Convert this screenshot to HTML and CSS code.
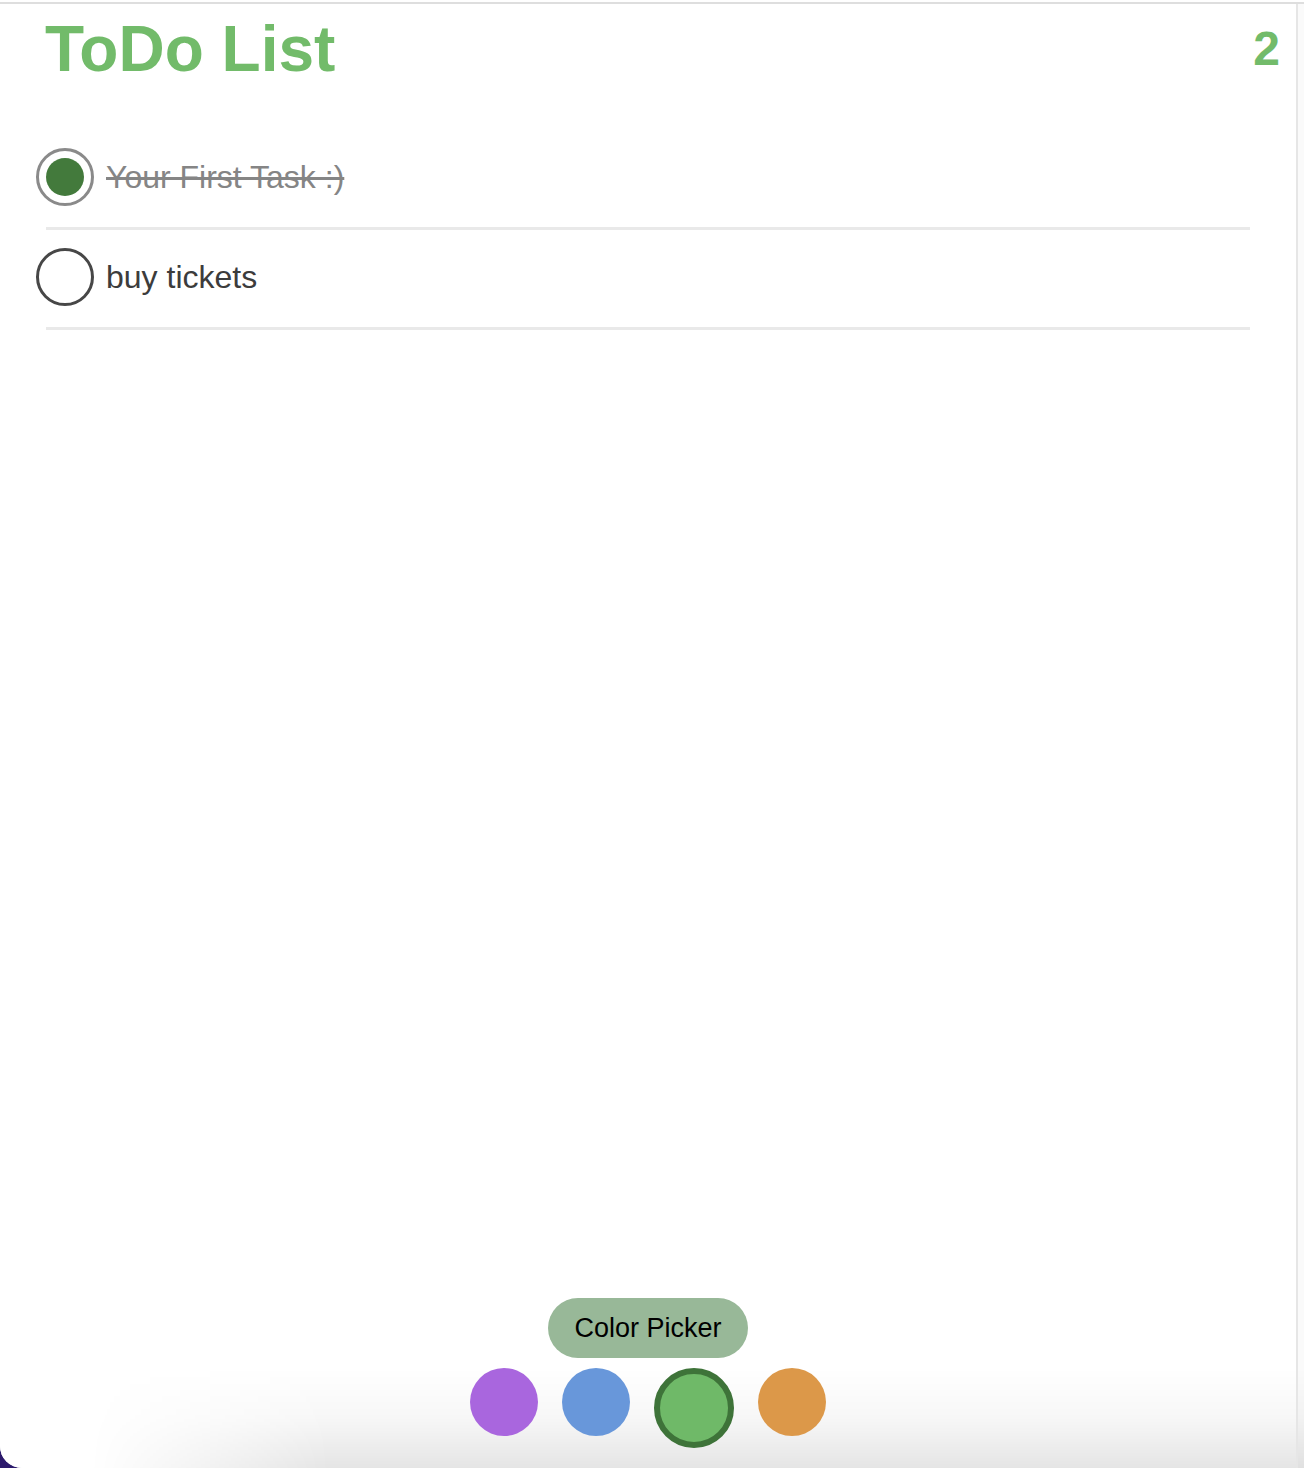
FILE: index.html
```html
<!DOCTYPE html>
<html lang="en">
<head>
<meta charset="utf-8">
<title>ToDo List</title>
<link rel="stylesheet" href="styles.css">
</head>
<body>
<div class="window">
  <div class="frame">
    <main class="card">
      <header class="header">
        <h1 class="title">ToDo List</h1>
        <span class="count">2</span>
      </header>
      <ul class="list">
        <li class="item done">
          <span class="check"></span>
          <span class="label">Your First Task :)</span>
        </li>
        <li class="item">
          <span class="check"></span>
          <span class="label">buy tickets</span>
        </li>
      </ul>
      <footer class="picker">
        <div class="picker-title">Color Picker</div>
        <div class="swatches">
          <span class="swatch purple"></span>
          <span class="swatch blue"></span>
          <span class="swatch green selected"></span>
          <span class="swatch orange"></span>
        </div>
      </footer>
    </main>
  </div>
</div>
</body>
</html>
```

FILE: styles.css
```css
html, body {
  margin: 0;
  padding: 0;
}
body {
  background: #2c1a6c;
  font-family: "Liberation Sans", Arial, Helvetica, sans-serif;
}
.window {
  height: 1468px;
  box-sizing: border-box;
  padding-top: 2px;
  background: #ffffff;
  border-bottom-left-radius: 22px;
  overflow: hidden;
  display: flex;
  flex-direction: column;
}
.frame {
  flex: 1;
  position: relative;
  border-top: 2px solid #dedede;
  background: linear-gradient(to right, #ffffff 1298px, #fafafa 1298px);
  display: flex;
}
.frame::before {
  content: "";
  position: absolute;
  left: 0;
  right: 0;
  bottom: 0;
  height: 100px;
  background: linear-gradient(to bottom, rgba(0,0,0,0) 0%, rgba(0,0,0,0.03) 50%, rgba(0,0,0,0.1) 100%);
  -webkit-mask-image: linear-gradient(to right, transparent 90px, #000 330px);
  mask-image: linear-gradient(to right, transparent 90px, #000 330px);
}
.card {
  position: relative;
  z-index: 1;
  width: 1296px;
  border-right: 2px solid #e6e6e6;
  display: flex;
  flex-direction: column;
}
.header {
  height: 90px;
  display: flex;
  align-items: center;
  justify-content: space-between;
  padding: 0 16px 0 45px;
}
.title {
  margin: 0;
  font-size: 64px;
  font-weight: 700;
  color: #72bb6a;
  line-height: 1;
}
.count {
  font-size: 48px;
  font-weight: 700;
  color: #72bb6a;
  line-height: 1;
}
.list {
  list-style: none;
  margin: 36px 46px 0;
  padding: 0;
}
.item {
  height: 94px;
  padding-bottom: 3px;
  display: flex;
  align-items: center;
  gap: 12px;
  border-bottom: 3px solid #e9e9e9;
}
.check {
  width: 58px;
  height: 58px;
  box-sizing: border-box;
  margin-left: -10px;
  border-radius: 50%;
  border: 3px solid #474747;
  flex: none;
}
.item.done .check {
  border-color: #8a8a8a;
  padding: 7px;
  background: #437a3c;
  background-clip: content-box;
}
.label {
  font-size: 32px;
  color: #3c3c3c;
}
.item.done .label {
  color: #858585;
  text-decoration: line-through;
}
.picker {
  margin-top: auto;
  display: flex;
  flex-direction: column;
  align-items: center;
  gap: 10px;
  padding-bottom: 20px;
}
.picker-title {
  width: 200px;
  height: 60px;
  border-radius: 30px;
  background: #98b898;
  color: #000;
  font-size: 27px;
  display: flex;
  align-items: center;
  justify-content: center;
}
.swatches {
  display: flex;
  align-items: flex-start;
  gap: 24px;
}
.swatch {
  width: 68px;
  height: 68px;
  border-radius: 50%;
  box-sizing: border-box;
}
.purple { background: #a966de; }
.blue { background: #6897da; }
.green { background: #6fb968; }
.orange { background: #dc9849; }
.swatch.selected {
  width: 80px;
  height: 80px;
  border: 6px solid #3e7339;
}
```
